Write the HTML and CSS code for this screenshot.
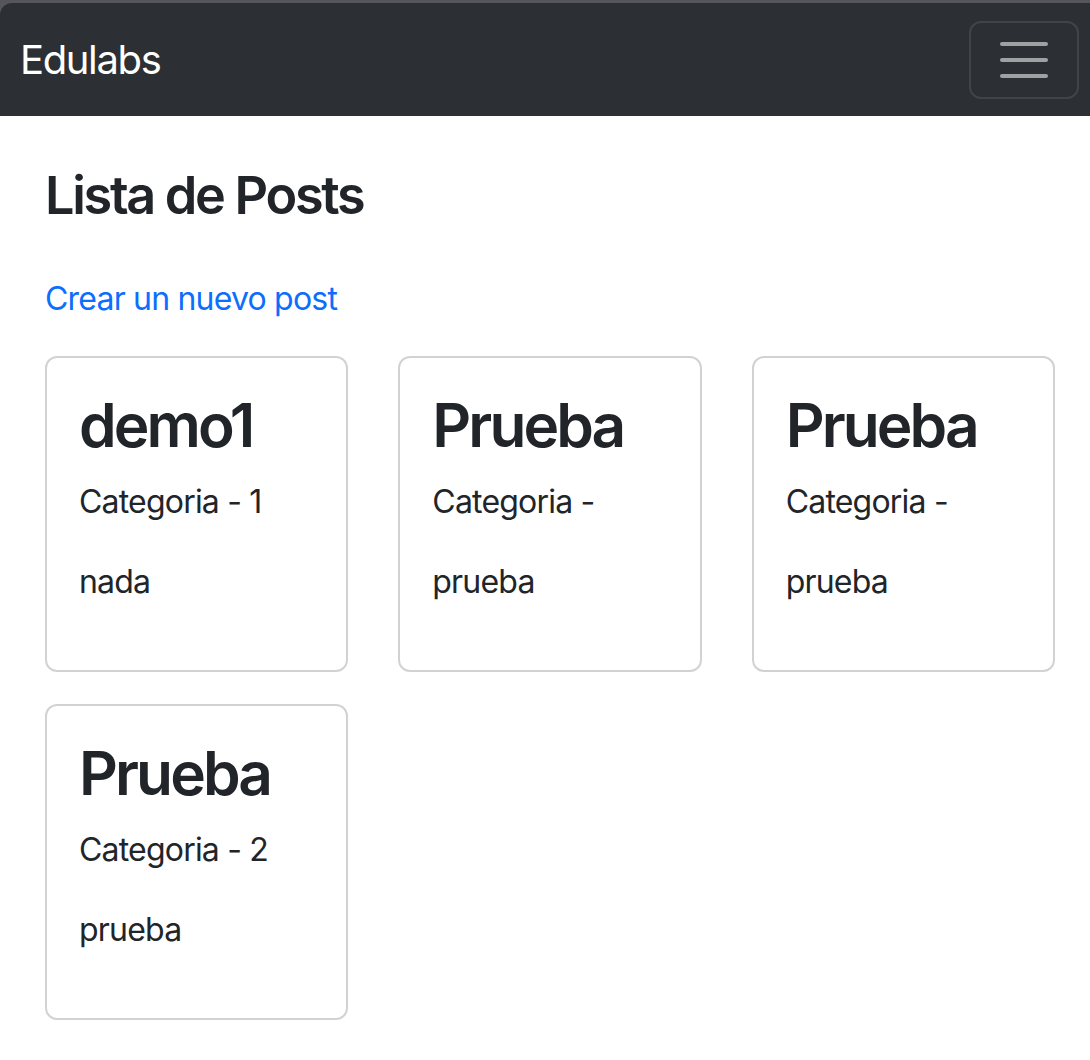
FILE: index.html
```html
<!DOCTYPE html>
<html lang="es">
<head>
<meta charset="utf-8">
<title>Edulabs</title>
<link rel="stylesheet" href="styles.css">
</head>
<body>
<div class="frame">
  <nav class="navbar">
    <a class="brand" href="#">Edulabs</a>
    <button class="toggler" type="button" aria-label="Toggle navigation">
      <svg class="toggler-icon" viewBox="0 0 30 30" width="60" height="60" aria-hidden="true">
        <path d="M4 7h22M4 15h22M4 23h22" fill="none" stroke="rgba(255,255,255,0.55)" stroke-width="2" stroke-linecap="round" stroke-miterlimit="10"/>
      </svg>
    </button>
  </nav>
</div>
<main class="container">
  <h2 class="page-title">Lista de Posts</h2>
  <p class="new-link-wrap"><a class="new-link" href="#">Crear un nuevo post</a></p>
  <div class="cards">
    <div class="card">
      <h1 class="card-title">demo1</h1>
      <p class="card-text">Categoria - 1</p>
      <p class="card-text">nada</p>
    </div>
    <div class="card">
      <h1 class="card-title">Prueba</h1>
      <p class="card-text">Categoria -</p>
      <p class="card-text">prueba</p>
    </div>
    <div class="card">
      <h1 class="card-title">Prueba</h1>
      <p class="card-text">Categoria -</p>
      <p class="card-text">prueba</p>
    </div>
    <div class="card">
      <h1 class="card-title">Prueba</h1>
      <p class="card-text">Categoria - 2</p>
      <p class="card-text">prueba</p>
    </div>
  </div>
</main>
</body>
</html>
```

FILE: styles.css
```css
* {
  box-sizing: border-box;
}

html, body {
  margin: 0;
  padding: 0;
  background: #ffffff;
}

body {
  font-family: Inter, "Noto Sans", "Liberation Sans", sans-serif;
  font-size: 32px;
  line-height: 1.5;
  color: #212529;
  letter-spacing: -0.025em;
}

.frame {
  background: #56565a;
  padding-top: 3px;
}

.navbar {
  height: 113px;
  background: #2c2f33;
  border-top-left-radius: 12px;
  display: flex;
  align-items: center;
  justify-content: space-between;
  padding: 0 11px 0 20px;
}

.brand {
  color: #ffffff;
  font-size: 40px;
  line-height: 60px;
  letter-spacing: -0.034em;
  text-decoration: none;
}

.toggler {
  width: 110px;
  height: 78px;
  padding: 0;
  margin: 0;
  background: transparent;
  border: 2px solid rgba(255, 255, 255, 0.1);
  border-radius: 12px;
  display: flex;
  align-items: center;
  justify-content: center;
}

.toggler-icon {
  display: block;
}

.container {
  padding: 48px 35px 0 45px;
}

.page-title {
  margin: 0 0 48px;
  font-size: 52.2px;
  line-height: 1.2;
  font-weight: 600;
  letter-spacing: -0.044em;
}

.new-link-wrap {
  margin: 0 0 33px;
}

.new-link {
  color: #0d6efd;
  text-decoration: none;
}

.cards {
  display: grid;
  grid-template-columns: repeat(3, 1fr);
  column-gap: 50px;
  row-gap: 32px;
}

.card {
  border: 2px solid rgba(0, 0, 0, 0.175);
  border-radius: 12px;
  padding: 32px;
}

.card-title {
  margin: 0 0 16px;
  font-size: 60.35px;
  line-height: 1.2;
  font-weight: 600;
  letter-spacing: -0.048em;
}

.card-text {
  margin: 0 0 32px;
}
```
